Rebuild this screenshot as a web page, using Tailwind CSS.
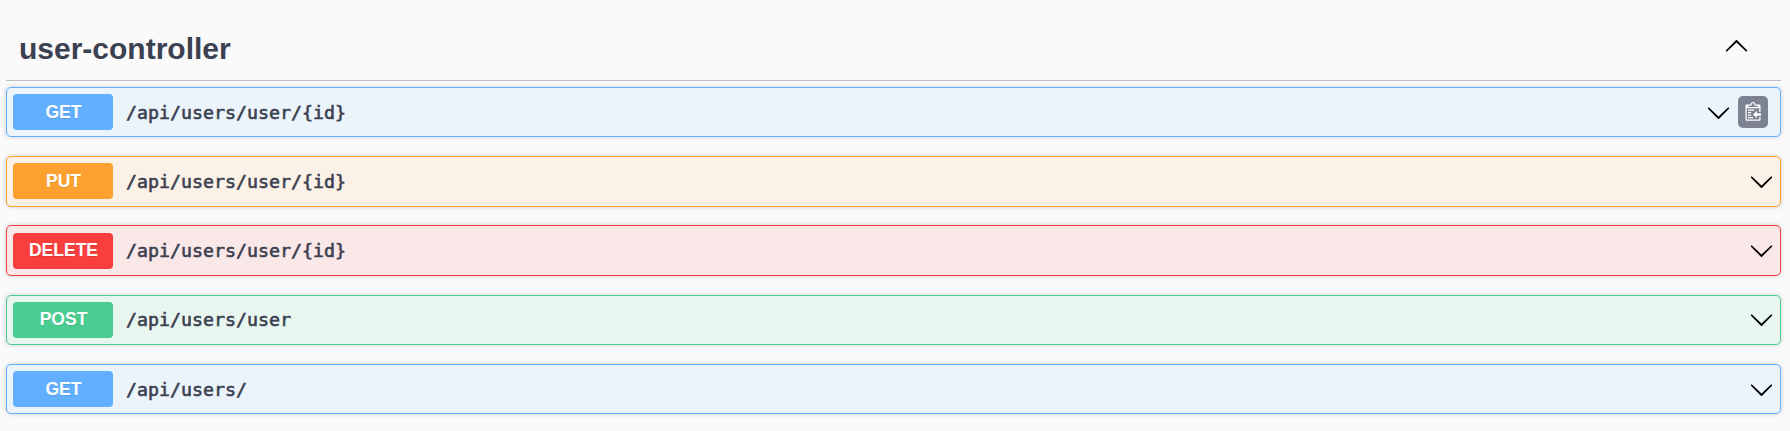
<!DOCTYPE html>
<html lang="en">
<head>
<meta charset="utf-8">
<title>user-controller</title>
<script src="https://cdn.jsdelivr.net/npm/@tailwindcss/browser@4"></script>
</head>
<body class="h-[431px] overflow-hidden bg-[#fafafa] pl-[6px] pr-[9px] font-['Liberation_Sans',sans-serif] text-[#3b4151]">
<svg class="hidden">
  <symbol id="down" viewBox="0 0 20 20"><path d="M17.418 6.109c.272-.268.709-.268.979 0s.271.701 0 .969l-7.908 7.83c-.27.268-.707.268-.979 0l-7.908-7.83c-.27-.268-.27-.701 0-.969.271-.268.709-.268.979 0L10 13.25l7.418-7.141z"/></symbol>
  <symbol id="copy" viewBox="0 0 15 16"><path fill="#fff" transform="translate(2 -1)" d="M2 13h4v1H2v-1zm5-6H2v1h5V7zm2 3V8l-3 3 3 3v-2h5v-2H9zM4.5 9H2v1h2.5V9zM2 12h2.5v-1H2v1zm9 1h1v2c-.02.28-.11.52-.3.7-.19.18-.42.28-.7.3H1c-.55 0-1-.45-1-1V4c0-.55.45-1 1-1h3c0-1.11.89-2 2-2 1.11 0 2 .89 2 2h3c.55 0 1 .45 1 1v5h-1V6H1v9h10v-2zM2 5h8c0-.55-.45-1-1-1H8c-.55 0-1-.45-1-1s-.45-1-1-1-1 .45-1 1-.45 1-1 1H3c-.55 0-1 .45-1 1z"/></symbol>
</svg>
<header class="flex h-[81px] items-center justify-between border-b border-[#bdbfc4] pl-[13px] pr-[32px] pt-[12px]">
  <h3 class="pt-[6px] text-[30px] font-bold leading-9">user-controller</h3>
  <svg class="mt-px size-[25px] rotate-180"><use href="#down"/></svg>
</header>
<main class="pt-[6px]">
  <section class="mb-[19px] flex h-[50px] items-start rounded-[5px] border border-[#61affe] bg-[#ebf3fb] pl-[6px] pr-[12px] pt-[6px] shadow-[0_0_4px_rgba(0,0,0,0.19)]">
    <span class="h-9 w-[100px] rounded-[4px] bg-[#61affe] pl-px text-center text-[17.5px] font-bold leading-9 text-white [text-shadow:0_1px_0_rgba(0,0,0,0.1)]">GET</span>
    <span class="ml-[13px] flex-1 font-['DejaVu_Sans_Mono',monospace] text-[18.27px] leading-[37px] [-webkit-text-stroke:0.6px_#3b4151]">/api/users/user/{id}</span>
    <svg class="mt-[5.5px] size-[25px]"><use href="#down"/></svg>
    <span class="ml-[7px] mt-[2px] flex h-8 w-[30px] items-start rounded-[5px] bg-[#7d8293] pl-[4.5px] pt-[5.7px]"><svg class="h-5 w-[18.75px]"><use href="#copy"/></svg></span>
  </section>
  <section class="mb-[18px] flex h-[51px] items-start rounded-[5px] border border-[#fca130] bg-[#fbf1e6] pl-[6px] pr-[6px] pt-[6px] shadow-[0_0_4px_rgba(0,0,0,0.19)]">
    <span class="h-9 w-[100px] rounded-[4px] bg-[#fca130] pl-px text-center text-[17.5px] font-bold leading-9 text-white [text-shadow:0_1px_0_rgba(0,0,0,0.1)]">PUT</span>
    <span class="ml-[13px] flex-1 font-['DejaVu_Sans_Mono',monospace] text-[18.27px] leading-[37px] [-webkit-text-stroke:0.6px_#3b4151]">/api/users/user/{id}</span>
    <svg class="mt-[5.5px] size-[25px]"><use href="#down"/></svg>
  </section>
  <section class="mb-[19px] flex h-[51px] items-start rounded-[5px] border border-[#f93e3e] bg-[#fae7e7] pl-[6px] pr-[6px] pt-[7px] shadow-[0_0_4px_rgba(0,0,0,0.19)]">
    <span class="h-9 w-[100px] rounded-[4px] bg-[#f93e3e] pl-px text-center text-[17.5px] font-bold leading-[34px] text-white [text-shadow:0_1px_0_rgba(0,0,0,0.1)]">DELETE</span>
    <span class="ml-[13px] flex-1 font-['DejaVu_Sans_Mono',monospace] text-[18.27px] leading-[35px] [-webkit-text-stroke:0.6px_#3b4151]">/api/users/user/{id}</span>
    <svg class="mt-[4.5px] size-[25px]"><use href="#down"/></svg>
  </section>
  <section class="mb-[19px] flex h-[50px] items-start rounded-[5px] border border-[#49cc90] bg-[#e8f6f0] pl-[6px] pr-[6px] pt-[6px] shadow-[0_0_4px_rgba(0,0,0,0.19)]">
    <span class="h-9 w-[100px] rounded-[4px] bg-[#49cc90] pl-px text-center text-[17.5px] font-bold leading-[34px] text-white [text-shadow:0_1px_0_rgba(0,0,0,0.1)]">POST</span>
    <span class="ml-[13px] flex-1 font-['DejaVu_Sans_Mono',monospace] text-[18.27px] leading-[35px] [-webkit-text-stroke:0.6px_#3b4151]">/api/users/user</span>
    <svg class="mt-[4.5px] size-[25px]"><use href="#down"/></svg>
  </section>
  <section class="flex h-[50px] items-start rounded-[5px] border border-[#61affe] bg-[#ebf3fb] pl-[6px] pr-[6px] pt-[6px] shadow-[0_0_4px_rgba(0,0,0,0.19)]">
    <span class="h-9 w-[100px] rounded-[4px] bg-[#61affe] pl-px text-center text-[17.5px] font-bold leading-9 text-white [text-shadow:0_1px_0_rgba(0,0,0,0.1)]">GET</span>
    <span class="ml-[13px] flex-1 font-['DejaVu_Sans_Mono',monospace] text-[18.27px] leading-[37px] [-webkit-text-stroke:0.6px_#3b4151]">/api/users/</span>
    <svg class="mt-[5.5px] size-[25px]"><use href="#down"/></svg>
  </section>
</main>
</body>
</html>
